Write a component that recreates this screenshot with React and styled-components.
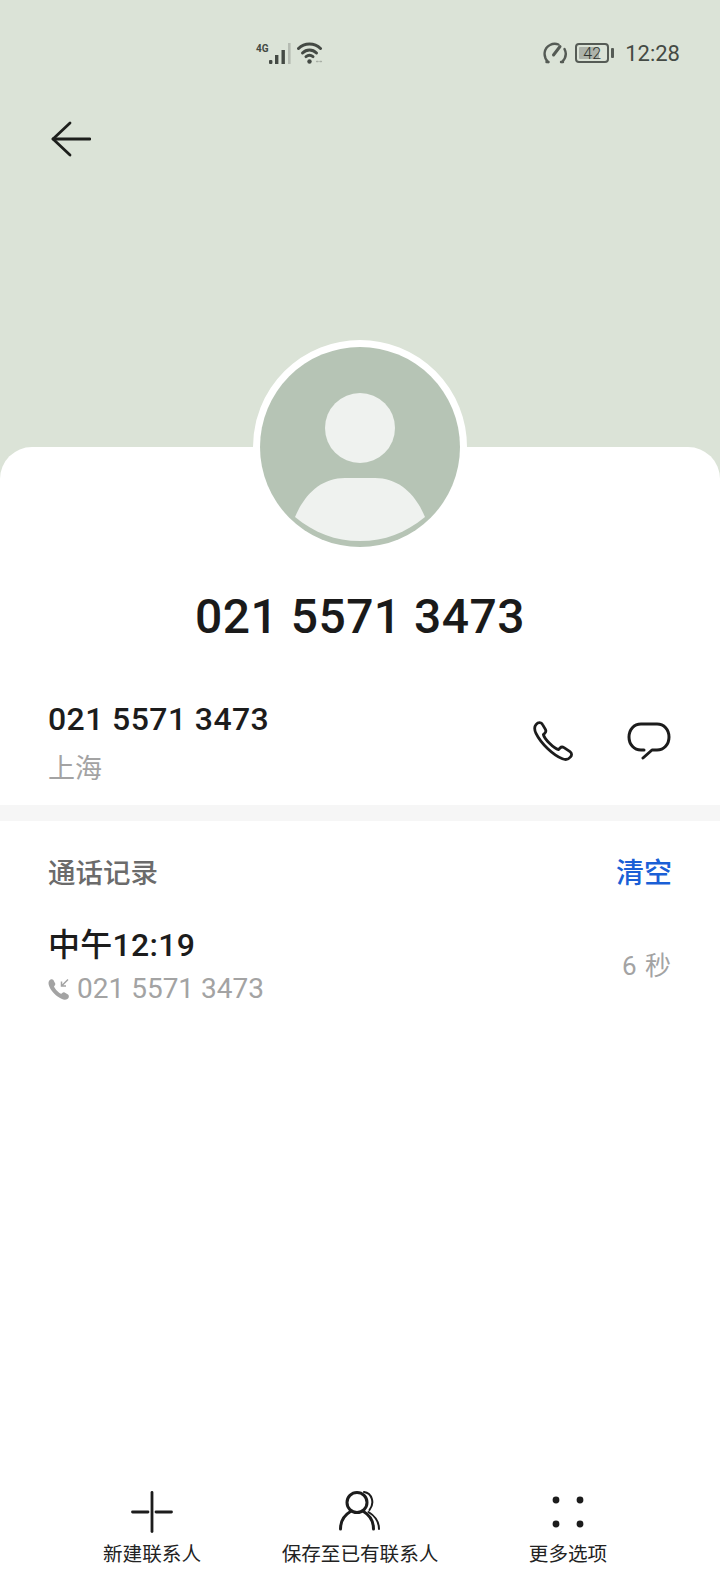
import React from "react";
import styled, { createGlobalStyle } from "styled-components";

const FONT = `Roboto, "Noto Sans CJK SC", sans-serif`;

const GlobalStyle = createGlobalStyle`
  html, body {
    margin: 0;
    padding: 0;
    background: #fff;
  }
  * {
    box-sizing: border-box;
  }
`;

const Page = styled.div`
  display: flex;
  flex-direction: column;
  width: 720px;
  height: 1584px;
  overflow: hidden;
  background: #dbe3d7;
  font-family: ${FONT};
`;

const Header = styled.header`
  height: 447px;
  flex-shrink: 0;
`;

const StatusBar = styled.div`
  display: flex;
  justify-content: space-between;
  align-items: center;
  height: 24px;
  margin-top: 41px;
  padding: 0 40px 0 256px;
  color: #444a44;
`;

const StatusGroup = styled.div`
  display: flex;
  align-items: center;
  gap: ${(props) => props.$gap}px;
`;

const NetworkLabel = styled.span`
  align-self: flex-start;
  margin: 1px -1px 0 0;
  font-size: 10px;
  line-height: 11px;
  font-weight: 700;
`;

const WifiSlot = styled.span`
  display: flex;
  margin-left: 5px;
`;

const BatteryBox = styled.div`
  display: flex;
  position: relative;
  align-items: center;
  justify-content: center;
  width: 34px;
  height: 20px;
  margin-right: 5px;
  border: 2px solid #555b55;
  border-radius: 4px;
  font-size: 16px;
  font-weight: 300;
  color: #2f332f;

  &::before {
    content: "";
    position: absolute;
    left: 2px;
    top: 2px;
    bottom: 2px;
    width: 20px;
    background: #adb3ab;
    border-radius: 1px;
  }

  &::after {
    content: "";
    position: absolute;
    right: -7px;
    top: 3px;
    width: 3px;
    height: 10px;
    background: #555b55;
    border-radius: 1px;
  }
`;

const BatteryLevel = styled.span`
  position: relative;
`;

const Clock = styled.span`
  margin: 1px 0 0 3px;
  font-size: 22px;
  line-height: 24px;
`;

const BackButton = styled.div`
  display: flex;
  margin: 56px 0 0 51px;
  width: 40px;
  height: 36px;
`;

const Card = styled.main`
  display: flex;
  flex-direction: column;
  flex: 1;
  min-height: 0;
  background: #fff;
  border-radius: 32px 32px 0 0;
`;

const Avatar = styled.div`
  flex-shrink: 0;
  align-self: center;
  width: 214px;
  height: 214px;
  margin-top: -107px;
  border: 7px solid #fff;
  border-radius: 50%;
  background: #fff;
`;

const Name = styled.h1`
  margin: 35px 0 0;
  font-size: 48px;
  line-height: 56px;
  font-weight: 500;
  letter-spacing: 0.45px;
  text-align: center;
  color: #1a1a1a;
`;

const NumberRow = styled.section`
  display: flex;
  justify-content: space-between;
  align-items: center;
  height: 139px;
  margin-top: 37px;
  padding: 0 48px;
  border-bottom: 16px solid #f6f6f6;
`;

const NumberInfo = styled.div`
  display: flex;
  flex-direction: column;
`;

const Number = styled.div`
  font-size: 32px;
  line-height: 40px;
  letter-spacing: 0.4px;
  font-weight: 500;
  color: #1c1c1c;
`;

const Muted = styled.div`
  font-size: 27px;
  line-height: 38px;
  margin-top: 11px;
  color: #a3a3a3;
`;

const RowActions = styled.div`
  display: flex;
  align-items: center;
  gap: 54px;
  margin: 0 1px 5px 0;
`;

const SectionHead = styled.div`
  display: flex;
  justify-content: space-between;
  align-items: center;
  margin-top: 33px;
  padding: 0 48px;
`;

const SectionTitle = styled.h2`
  margin: 0;
  font-size: 27.5px;
  line-height: 40px;
  font-weight: 500;
  color: #6b6b6b;
`;

const ClearLink = styled.span`
  font-size: 28px;
  line-height: 40px;
  font-weight: 500;
  color: #1a5fd6;
`;

const CallRow = styled.div`
  display: flex;
  justify-content: space-between;
  align-items: center;
  margin-top: 29px;
  padding: 0 48px;
`;

const CallInfo = styled.div`
  display: flex;
  flex-direction: column;
`;

const CallTime = styled.div`
  font-size: 32px;
  line-height: 44px;
  font-weight: 500;
  letter-spacing: 0.3px;
  color: #1c1c1c;
`;

const CallNumber = styled.div`
  display: flex;
  align-items: center;
  gap: 7px;
  margin-top: 3px;
  font-size: 28px;
  line-height: 38px;
  color: #a3a3a3;
`;

const Duration = styled.span`
  margin-bottom: 4px;
  font-size: 26px;
  color: #a3a3a3;
  letter-spacing: 1px;
`;

const BottomBar = styled.nav`
  display: grid;
  grid-template-columns: repeat(3, 1fr);
  margin-top: auto;
  padding: 0 48px 15px;
`;

const BarItem = styled.div`
  display: flex;
  flex-direction: column;
  align-items: center;
  gap: 8px;
  font-size: 19.6px;
  line-height: 28px;
  white-space: nowrap;
  color: #222;
`;

const SignalIcon = () => (
  <svg width="22" height="21" viewBox="0 0 22 21" fill="#444a44">
    <rect x="0" y="17" width="3.4" height="4" rx="1" />
    <rect x="6" y="12" width="3.4" height="9" />
    <rect x="12.5" y="7" width="3.4" height="14" />
    <rect x="19" y="0" width="2.6" height="21" fill="#b5bbb2" />
  </svg>
);

const WifiIcon = () => (
  <svg width="26" height="22" viewBox="0 0 26 22" fill="none" stroke="#444a44" strokeWidth="3" strokeLinecap="round">
    <path d="M1.5 6.5 C7.5 0.5 17.5 0.5 23.5 6.5" />
    <path d="M5.5 11 C9.5 7 15.5 7 19.5 11" />
    <path d="M9 14.6 C11.4 12.8 13.6 12.8 16 14.6" />
    <circle cx="12.5" cy="19.5" r="2.2" fill="#444a44" stroke="none" />
    <path d="M19.6 19.5 h1.4 M23 19.5 h1.4" stroke="#a9afa6" strokeWidth="1.5" />
  </svg>
);

const GaugeIcon = () => (
  <svg width="24" height="22" viewBox="0 0 24 22" fill="none" stroke="#555b55" strokeWidth="2.4" strokeLinecap="round">
    <path d="M5 20 C-0.5 14 1 6 7 3 C10 1.4 13 1.5 15.5 2.5" />
    <path d="M19 20 C23 16 23.5 11 21.5 7" />
    <path d="M10.5 13 L17 4.5" strokeWidth="3" />
    <path d="M3.5 20 h2 M18 20 h2" />
  </svg>
);

const ArrowIcon = () => (
  <svg width="40" height="36" viewBox="0 0 40 36" fill="none" stroke="#1d1f1c" strokeWidth="2.8" strokeLinecap="round" strokeLinejoin="round">
    <path d="M19 2 L2 18 L19 34" />
    <path d="M2 18 H39" />
  </svg>
);

const AvatarArt = () => (
  <svg width="200" height="200" viewBox="0 0 200 200">
    <circle cx="100" cy="100" r="100" fill="#b6c4b5" />
    <circle cx="100" cy="81" r="35" fill="#eff2ef" />
    <path d="M35 170 C45 146 62 131 85 131 H115 C138 131 155 146 165 170 C145 186 125 194 100 194 C75 194 55 186 35 170 Z" fill="#eff2ef" />
  </svg>
);

const PhoneIcon = () => (
  <svg width="40" height="40" viewBox="0 0 40 40" fill="none" stroke="#1c1c1c" strokeWidth="2.8" strokeLinejoin="round">
    <path d="M3 3.6 C5.2 1 8.4 1.2 9.6 3.6 L12.4 8.4 C13.2 10 12.8 11.4 11.6 12.4 L10.4 13.6 C11.4 18 20.6 27.4 25.6 28.6 L27 27 C28 26 29.6 25.8 31 26.6 L37 30.6 C39 32 39 34.4 37.4 36 C35.4 38.6 32.4 39 29.4 37.8 C20 34 8 22.6 3 12.4 C1.4 9 1 6 3 3.6 Z" />
  </svg>
);

const MessageIcon = () => (
  <svg width="44" height="38" viewBox="0 0 44 38" fill="none" stroke="#1c1c1c" strokeWidth="3" strokeLinecap="round" strokeLinejoin="round">
    <path d="M17 28 H14 C7 28 2 22.5 2 15 C2 7.5 7 2 14 2 H30 C37 2 42 7.5 42 15 C42 22.5 37 28 30 28 H25 L16 36" />
  </svg>
);

const IncomingIcon = () => (
  <svg width="22" height="22" viewBox="0 0 22 22">
    <path d="M1 3 C2 1 4.5 0.6 5.4 2 L7.2 5.4 C7.6 6.6 7 7.4 6 8.4 C7 11 10.6 14.8 13.4 15.8 C14.4 14.6 15.4 14 16.6 14.6 L20 16.6 C21.4 17.6 21 20 19.4 21 C17 22.4 13.6 21.6 9.6 18.6 C5 15.2 1.6 10.4 0.8 7 C0.4 5.4 0.4 4 1 3 Z" fill="#a3a3a3" />
    <path d="M20 1.5 L13.5 8 M13.5 3.6 V8 H18" fill="none" stroke="#a3a3a3" strokeWidth="1.5" />
  </svg>
);

const PlusIcon = () => (
  <svg width="42" height="42" viewBox="0 0 42 42" fill="none" stroke="#1c1c1c" strokeWidth="2.8" strokeLinecap="round">
    <path d="M21 1.5 V40.5" />
    <path d="M1.5 21 H17" />
    <path d="M25 21 H40.5" />
  </svg>
);

const ContactIcon = () => (
  <svg width="42" height="42" viewBox="0 0 42 42" fill="none" stroke="#1c1c1c" strokeWidth="3" strokeLinecap="round">
    <circle cx="18" cy="11.5" r="10" />
    <path d="M1.5 38 C1.5 30 5.5 24 11.5 20.5" />
    <path d="M24.5 20.5 C30.5 24 34.5 30 34.5 38" />
    <path d="M25 1 C33 2 36 12 30.5 19" strokeWidth="2" />
    <path d="M29.5 21 C36 25 40 31 40 38" strokeWidth="2" />
  </svg>
);

const DotsIcon = () => (
  <svg width="42" height="42" viewBox="0 0 42 42" fill="#1c1c1c">
    <circle cx="9" cy="9" r="3.4" />
    <circle cx="33" cy="9" r="3.4" />
    <circle cx="9" cy="33" r="3.4" />
    <circle cx="33" cy="33" r="3.4" />
  </svg>
);

export default function App() {
  return (
    <Page>
      <GlobalStyle />
      <Header>
        <StatusBar>
          <StatusGroup $gap={1}>
            <NetworkLabel>4G</NetworkLabel>
            <SignalIcon />
            <WifiSlot>
              <WifiIcon />
            </WifiSlot>
          </StatusGroup>
          <StatusGroup $gap={8}>
            <GaugeIcon />
            <BatteryBox>
              <BatteryLevel>42</BatteryLevel>
            </BatteryBox>
            <Clock>12:28</Clock>
          </StatusGroup>
        </StatusBar>
        <BackButton>
          <ArrowIcon />
        </BackButton>
      </Header>

      <Card>
        <Avatar>
          <AvatarArt />
        </Avatar>
        <Name>021 5571 3473</Name>

        <NumberRow>
          <NumberInfo>
            <Number>021 5571 3473</Number>
            <Muted>上海</Muted>
          </NumberInfo>
          <RowActions>
            <PhoneIcon />
            <MessageIcon />
          </RowActions>
        </NumberRow>

        <SectionHead>
          <SectionTitle>通话记录</SectionTitle>
          <ClearLink>清空</ClearLink>
        </SectionHead>

        <CallRow>
          <CallInfo>
            <CallTime>中午12:19</CallTime>
            <CallNumber>
              <IncomingIcon />
              021 5571 3473
            </CallNumber>
          </CallInfo>
          <Duration>6 秒</Duration>
        </CallRow>

        <BottomBar>
          <BarItem>
            <PlusIcon />
            新建联系人
          </BarItem>
          <BarItem>
            <ContactIcon />
            保存至已有联系人
          </BarItem>
          <BarItem>
            <DotsIcon />
            更多选项
          </BarItem>
        </BottomBar>
      </Card>
    </Page>
  );
}
